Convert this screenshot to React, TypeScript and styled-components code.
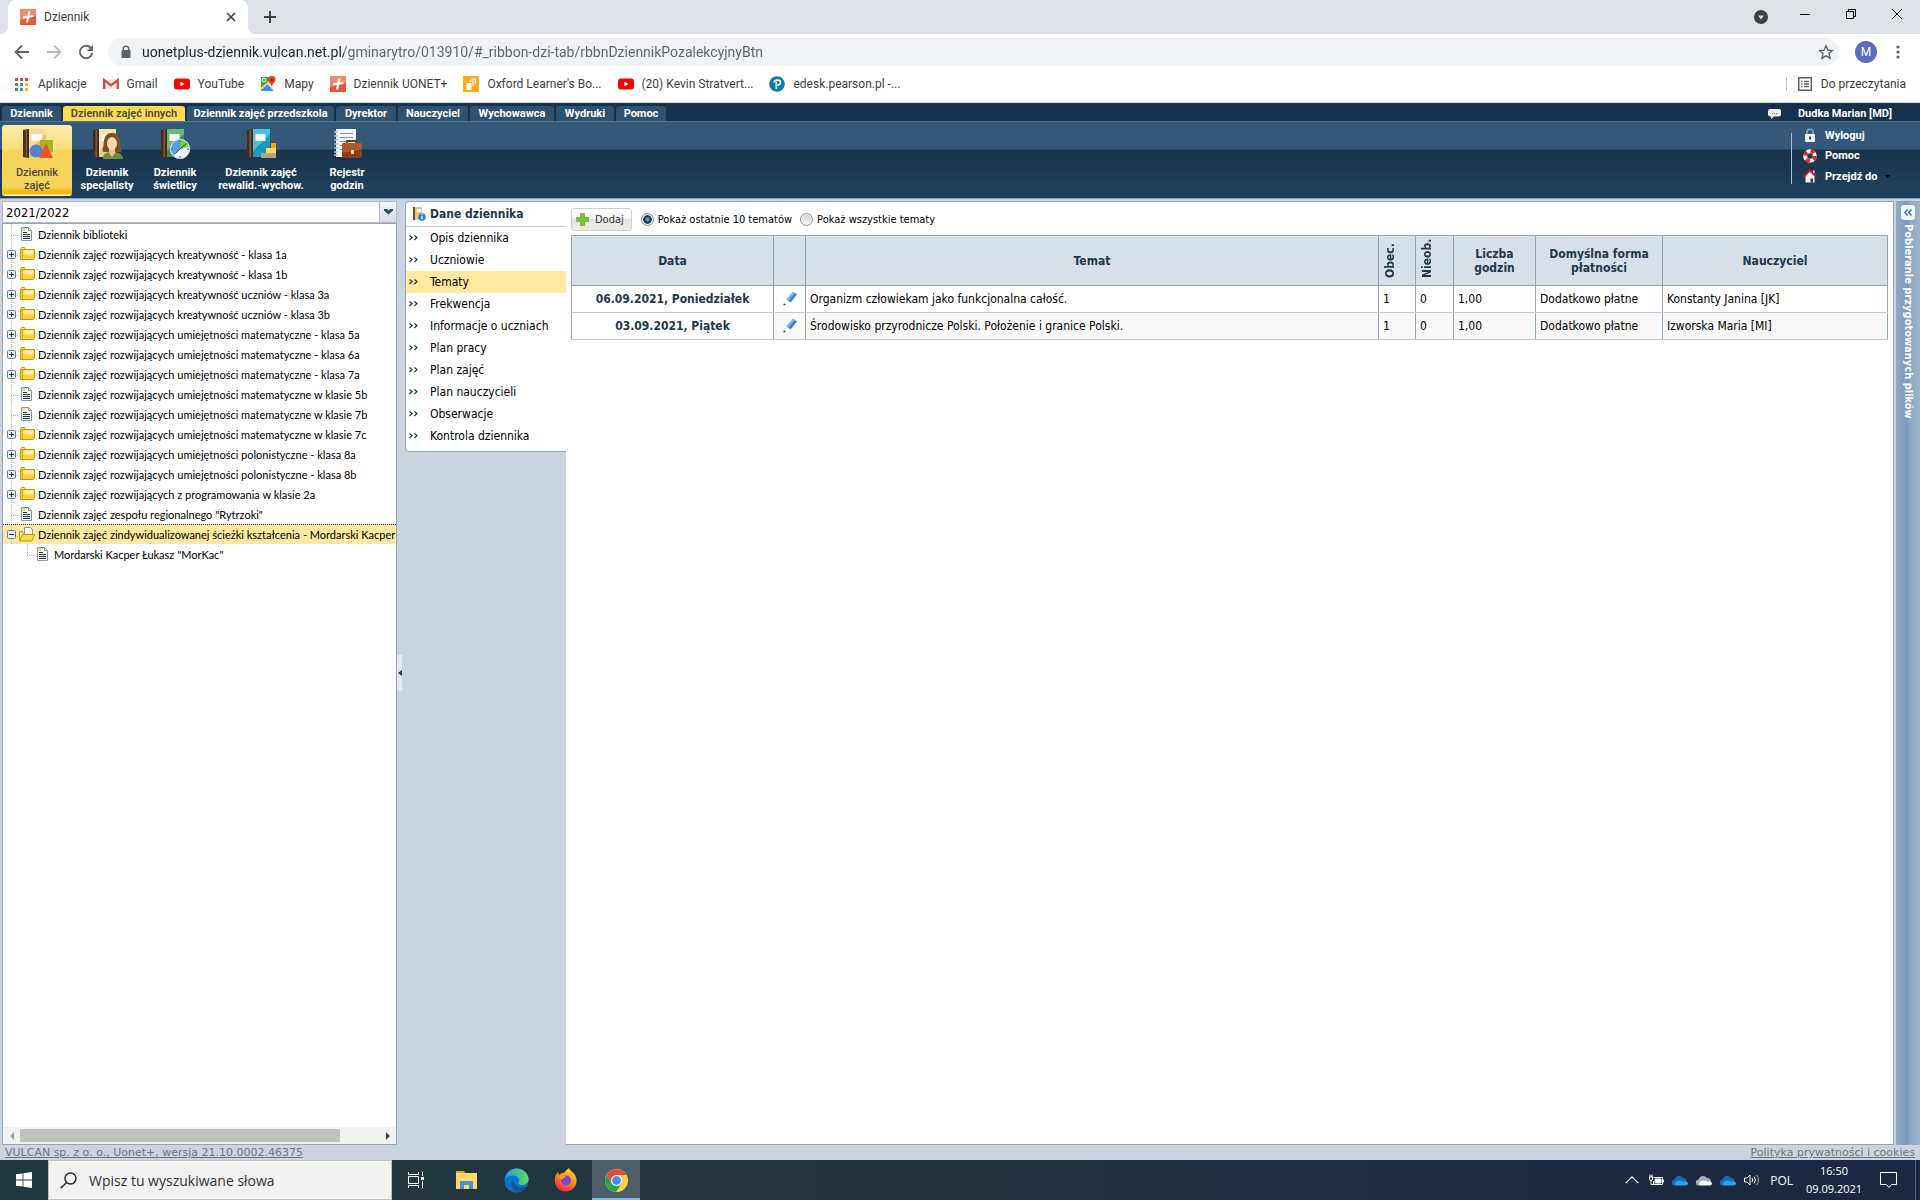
import React from "react";
import styled, { createGlobalStyle, css } from "styled-components";

const tahoma = `"DejaVu Sans Condensed", "DejaVu Sans", sans-serif`;
const compact = `Roboto, "Noto Sans", sans-serif`;
const segoe = `"Open Sans", "Noto Sans", sans-serif`;

const Global = createGlobalStyle`
  *, *::before, *::after { box-sizing: border-box; }
  body { margin: 0; background: #cad4e1; font-family: ${tahoma}; font-size: 12px; color: #000; }
  button, input, select { font: inherit; color: inherit; margin: 0; }
  button { border: 0; padding: 0; background: none; cursor: pointer; }
  ul { list-style: none; margin: 0; padding: 0; }
  a { color: inherit; text-decoration: none; }
  svg { display: block; flex: none; }
`;

const Page = styled.div`
  display: flex;
  flex-direction: column;
  height: 100vh;
  overflow: hidden;
`;

/* ---------- browser ---------- */

const TabStrip = styled.div`
  display: flex;
  align-items: stretch;
  height: 34px;
  padding-left: 8px;
  background: #dee1e6;
  font-family: ${compact};
`;

const BrowserTab = styled.div`
  position: relative;
  display: flex;
  align-items: center;
  gap: 8px;
  width: 240px;
  padding: 0 10px 0 12px;
  border-radius: 8px 8px 0 0;
  background: #fff;
  color: #3c4043;
  &::before, &::after {
    content: "";
    position: absolute;
    bottom: 0;
    width: 8px;
    height: 8px;
  }
  &::before { left: -8px; background: radial-gradient(circle at 0 0, transparent 8px, #fff 8px); }
  &::after { right: -8px; background: radial-gradient(circle at 100% 0, transparent 8px, #fff 8px); }
`;

const TabTitle = styled.span`
  flex: 1;
`;

const NewTab = styled.button`
  display: grid;
  place-items: center;
  width: 28px;
  margin-left: 8px;
`;

const WindowButtons = styled.div`
  display: flex;
  align-items: flex-start;
  margin-left: auto;
`;

const WindowButton = styled.button`
  display: grid;
  place-items: center;
  width: 46px;
  height: 28px;
`;

const TabSearch = styled(WindowButton)`
  width: 42px;
  height: 34px;
`;

const AddressRow = styled.div`
  display: flex;
  align-items: center;
  height: 36px;
  padding: 0 6px;
  background: #fff;
  font-family: ${compact};
`;

const NavButton = styled.button`
  display: grid;
  place-items: center;
  width: 32px;
  height: 28px;
`;

const Omnibox = styled.label`
  display: flex;
  flex: 1;
  align-items: center;
  gap: 10px;
  height: 28px;
  margin: 0 6px;
  padding: 0 5px 0 12px;
  border-radius: 14px;
  background: #f1f3f4;
`;

const UrlInput = styled.input`
  flex: 1;
  border: 0;
  padding: 0;
  outline: 0;
  font-size: 14px;
  line-height: 20px;
  color: transparent;
  background: linear-gradient(90deg, #202124 202px, #5f6368 202px);
  background-clip: text;
`;

const Avatar = styled.button`
  width: 22px;
  height: 22px;
  margin: 0 5px 0 10px;
  border-radius: 50%;
  background: #5c6bc0;
  color: #fff;
`;

const Bookmarks = styled.nav`
  display: flex;
  align-items: center;
  height: 33px;
  padding: 0 14px 4px;
  border-bottom: 1px solid #d0d3d6;
  background: #fff;
  color: #3c4043;
  font-family: ${compact};
  font-size: 12px;
`;

const Bookmark = styled.a<{ $push?: boolean }>`
  display: flex;
  align-items: center;
  gap: 8px;
  margin-right: 16px;
  ${(p) => p.$push && css`
    margin: 0 0 0 auto;
    padding-left: 11px;
    border-left: 1px solid #c4c7ca;
    gap: 9px;
  `}
`;

/* ---------- application header ---------- */

const TabBar = styled.div`
  display: flex;
  align-items: flex-end;
  height: 18px;
  padding-left: 2px;
  background: #18314a;
  font-family: ${compact};
  font-size: 11px;
  font-weight: 700;
  color: #fff;
`;

const RibbonTab = styled.button<{ $active?: boolean; $w: number }>`
  width: ${(p) => p.$w}px;
  height: 15px;
  margin-right: 2px;
  border-radius: 3px 3px 0 0;
  background: ${(p) => (p.$active ? "#ffda50" : "#2f5273")};
  color: ${(p) => (p.$active ? "#4a4a3c" : "#fff")};
  font-weight: ${(p) => (p.$active ? 600 : 700)};
  line-height: 16px;
  white-space: nowrap;
`;

const User = styled.div`
  display: flex;
  align-items: center;
  gap: 17px;
  height: 15px;
  margin: 0 28px 0 auto;
  line-height: 15px;
`;

const Ribbon = styled.header`
  display: flex;
  height: 77px;
  padding: 3px 2px 0;
  border-top: 1px solid #557590;
  background: linear-gradient(#335879 0 27px, #19334b 28px, #20425f);
  font-family: ${compact};
  font-size: 11px;
  font-weight: 700;
  color: #fff;
`;

const RibbonButton = styled.button<{ $active?: boolean; $wide?: boolean }>`
  display: flex;
  flex-direction: column;
  align-items: center;
  gap: 7px;
  width: ${(p) => (p.$wide ? 102 : p.$active ? 70 : 66)}px;
  height: 71px;
  margin-right: 2px;
  padding-top: 4px;
  border-radius: 3px;
  line-height: 13px;
  white-space: pre-line;
  ${(p) => p.$active && css`
    background: linear-gradient(#fcebad 0, #f9df79 24px, #f5d55a 25px, #f5d55a 62px, #efbc10 66px, #efbc10 69px, #fff3c0 70px);
    color: #4a4a3c;
    font-weight: 500;
  `}
`;

const QuickMenu = styled.ul`
  display: flex;
  flex-direction: column;
  justify-content: space-between;
  height: 59px;
  margin: 1px 26px 0 auto;
  padding-left: 12px;
  background: linear-gradient(#a9bccb, #a9bccb) 0 7px / 1px 51px no-repeat;
`;

const QuickLink = styled.a`
  display: flex;
  align-items: center;
  gap: 8px;
  width: 89px;
  height: 18px;
`;

/* ---------- workspace ---------- */

const Work = styled.div`
  display: flex;
  flex: 1;
  min-height: 0;
  padding-top: 2px;
  border-top: 1px solid #8aa0b6;
`;

const Side = styled.aside`
  display: flex;
  flex-direction: column;
  width: 395px;
  margin-left: 2px;
`;

const YearBox = styled.div`
  display: flex;
  flex: none;
  position: relative;
  height: 22px;
  border: 1px solid #b5b8c8;
  background: #fff;
`;

const YearSelect = styled.select`
  flex: 1;
  appearance: none;
  border: 0;
  padding: 0 3px;
  outline: 0;
  background: linear-gradient(#f0f2f3, #fff 5px);
  font-size: 13px;
`;

const YearArrow = styled.span`
  position: absolute;
  right: 0;
  top: 0;
  display: grid;
  place-items: center;
  width: 17px;
  height: 20px;
  border-left: 1px solid #b5b8c8;
  background: linear-gradient(#f7f8f9, #d4dae2);
  pointer-events: none;
`;

const TreePanel = styled.div`
  display: flex;
  flex: 1;
  flex-direction: column;
  justify-content: space-between;
  min-height: 0;
  border: 1px solid #8ea6be;
  background: #fff;
`;

const Tree = styled.ul`
  overflow: hidden;
  font-family: Lato, ${compact};
  font-size: 11px;
`;

const TreeRow = styled.li<{ $selected?: boolean; $child?: boolean }>`
  display: flex;
  align-items: center;
  height: 20px;
  padding-left: ${(p) => (p.$child ? 20 : 4)}px;
  white-space: nowrap;
  ${(p) => p.$selected && css`
    border-top: 1px dotted #333;
    background: #ffe8a0;
  `}
`;

const Branch = styled.span<{ $child?: boolean }>`
  display: grid;
  align-items: center;
  flex: none;
  width: 12px;
  height: 20px;
  background:
    repeating-linear-gradient(#b8b8b8 0 1px, transparent 1px 2px) 4px 0 / 1px ${(p) => (p.$child ? "11px" : "100%")} no-repeat,
    repeating-linear-gradient(90deg, #b8b8b8 0 1px, transparent 1px 2px) 4px 11px / 7px 1px no-repeat;
`;

const TreeLink = styled.a`
  display: flex;
  flex: none;
  align-items: center;
  gap: 3px;
`;

const ScrollTrack = styled.div`
  display: flex;
  align-items: center;
  height: 17px;
  background: #f1f1f1;
`;

const ScrollArrow = styled.button`
  display: grid;
  place-items: center;
  width: 17px;
  height: 17px;
`;

const ScrollThumb = styled.div`
  width: 89%;
  height: 13px;
  background: #c1c1c1;
`;

const ScrollRoom = styled.div`
  flex: 1;
`;

const Splitter = styled.div`
  display: flex;
  align-items: center;
  width: 8px;
`;

const SplitGrip = styled.button`
  display: grid;
  place-items: center;
  width: 5px;
  height: 36px;
  background: #e3e9f0;
`;

const Menu = styled.nav`
  align-self: flex-start;
  width: 161px;
  height: 251px;
  border: solid #8ea6be;
  border-width: 1px 0 1px 1px;
  border-radius: 4px 0 0 4px;
  background: #fff;
`;

const MenuTitle = styled.h2`
  display: flex;
  align-items: center;
  gap: 4px;
  height: 25px;
  margin: 0;
  padding-left: 6px;
  border-bottom: 1px solid #c8cbd0;
  font-size: 12px;
  font-weight: 700;
  color: #20384e;
`;

const MenuLink = styled.a<{ $active?: boolean }>`
  display: flex;
  align-items: center;
  gap: 12px;
  height: 22px;
  padding-left: 3px;
  background: ${(p) => (p.$active ? "#ffe8a0" : "transparent")};
`;

const Content = styled.main`
  flex: 1;
  min-width: 0;
  padding: 6px 5px;
  border: solid #8ea6be;
  border-width: 1px 1px 1px 0;
  background: #fff;
`;

const Toolbar = styled.div`
  display: flex;
  align-items: center;
  height: 23px;
  margin-bottom: 4px;
  font-size: 11px;
`;

const AddButton = styled.button`
  display: flex;
  align-items: center;
  gap: 6px;
  height: 23px;
  margin-right: 9px;
  padding: 0 7px 0 4px;
  border: 1px solid #d0d0d0;
  border-radius: 3px;
  background: linear-gradient(#fff, #f4f4f4 50%, #e4e4e4 50%, #eaeaea);
  color: #333;
`;

const RadioLabel = styled.label`
  display: flex;
  align-items: center;
  gap: 4px;
  margin-right: 8px;
`;

const Radio = styled.input`
  appearance: none;
  width: 13px;
  height: 13px;
  margin: 0;
  border: 1px solid #8d8d8d;
  border-radius: 50%;
  background: linear-gradient(#cfcfcf, #f7f7f7);
  box-shadow: inset 0 0 0 1px #f5f5f5;
  &:checked { background: radial-gradient(circle, #4fa3c8 0 1px, #17405e 3px, #17405e 4px, #f0f4f7 5px); }
`;

const Table = styled.table`
  width: 100%;
  table-layout: fixed;
  border-collapse: collapse;
`;

const Col = styled.col<{ $w?: number }>`
  ${(p) => p.$w && css`width: ${p.$w}px;`}
`;

const Th = styled.th<{ $start?: boolean }>`
  height: 50px;
  padding: 0 4px;
  border: 1px solid #8ea6be;
  background: #d7dfe8;
  line-height: 14px;
  text-align: ${(p) => (p.$start ? "left" : "center")};
  color: #20384e;
`;

const Upright = styled.span`
  display: inline-block;
  height: 42px;
  padding-top: 2px;
  writing-mode: vertical-rl;
  transform: rotate(180deg);
  line-height: 14px;
`;

const Td = styled.td<{ $strong?: boolean }>`
  height: 27px;
  padding: 0 4px;
  border: solid #8ea6be;
  border-width: 0 1px;
  border-bottom: 1px solid #c8cbcf;
  white-space: nowrap;
  ${(p) => p.$strong && css`
    font-weight: 700;
    text-align: center;
    color: #20384e;
  `}
`;

const Tr = styled.tr`
  &:nth-child(even) td { background: #f9f9f9; }
  &:nth-child(even) td:first-child { background: #fff; }
`;

const EditButton = styled.button`
  display: grid;
  width: 100%;
  place-items: center;
`;

const FilesBar = styled.aside`
  display: flex;
  flex-direction: column;
  align-items: center;
  gap: 4px;
  width: 24px;
  margin-left: 2px;
  padding-top: 4px;
  background: linear-gradient(90deg, #8faac3, #7b9aba 12px, #8ba8c3 13px, #9db4ca);
  color: #fff;
  font-size: 11px;
  font-weight: 700;
`;

const Expand = styled.button`
  display: grid;
  place-items: center;
  width: 14px;
  height: 15px;
  border-radius: 3px;
  background: #f1f6fc;
`;

const FilesTitle = styled.span`
  writing-mode: vertical-rl;
  line-height: 14px;
`;

const Footer = styled.footer`
  display: flex;
  justify-content: space-between;
  height: 15px;
  padding: 0 5px;
  font-family: "DejaVu Sans", sans-serif;
  font-size: 11px;
  line-height: 15px;
  color: #6e757c;
  a { text-decoration: underline; }
`;

/* ---------- taskbar ---------- */

const Taskbar = styled.div`
  display: flex;
  align-items: center;
  height: 40px;
  background: linear-gradient(90deg, #22373f, #22353f 50%, #1a2941 85%);
  color: #fff;
  font-family: ${segoe};
`;

const StartButton = styled.button`
  display: grid;
  place-items: center;
  width: 48px;
  height: 40px;
`;

const SearchBox = styled.label`
  display: flex;
  align-items: center;
  gap: 12px;
  width: 344px;
  height: 40px;
  padding-left: 11px;
  border: 1px solid #bfbfbf;
  background: #f1f1f1;
  color: #222;
  font-size: 14px;
`;

const SearchInput = styled.input`
  flex: 1;
  border: 0;
  padding: 0;
  outline: 0;
  background: none;
  &::placeholder { color: #333; }
`;

const TaskButton = styled.button<{ $active?: boolean }>`
  display: grid;
  place-items: center;
  width: 48px;
  height: 40px;
  margin-right: 2px;
  ${(p) => p.$active && css`
    background: #4d5e66;
    box-shadow: inset 0 -2px #76b9ed;
  `}
`;

const Tray = styled.div`
  display: flex;
  align-items: center;
  gap: 8px;
  height: 40px;
  margin-left: auto;
  padding-right: 4px;
  font-size: 12px;
`;

const Lang = styled.span`
  margin-left: 2px;
`;

const Clock = styled.time`
  width: 66px;
  font-size: 11px;
  line-height: 18px;
  text-align: center;
  white-space: pre-line;
`;

const Notify = styled.button`
  display: grid;
  place-items: center;
  width: 26px;
  height: 40px;
  margin-right: 6px;
`;

const ShowDesktop = styled.button`
  width: 1px;
  height: 40px;
  background: #56637a;
`;

/* ---------- icons ---------- */

const VulcanIcon = () => (
  <svg width="16" height="16" viewBox="0 0 16 16">
    <rect width="16" height="16" fill="#e65a32" />
    <path d="M0 0h16v7L0 11z" fill="#f08a6a" />
    <path d="M9.4 2.5 7 13.5M3 8.4 13.5 7" stroke="#fff" strokeWidth="2.2" />
  </svg>
);
const YouTubeIcon = () => (
  <svg width="16" height="16" viewBox="0 0 16 16">
    <rect y="2.5" width="16" height="11" rx="3" fill="#f00" />
    <path d="m6.4 5.7 4.2 2.3-4.2 2.3z" fill="#fff" />
  </svg>
);
const AppsIcon = () => (
  <svg width="16" height="16" viewBox="0 0 16 16">
    {["#ea4335", "#ea4335", "#ea4335", "#34a853", "#4285f4", "#fbbc05", "#34a853", "#34a853", "#fbbc05"].map((c, i) => (
      <rect key={i} x={1 + (i % 3) * 5} y={2 + Math.floor(i / 3) * 5} width="3" height="3" fill={c} />
    ))}
  </svg>
);
const GmailIcon = () => (
  <svg width="16" height="16" viewBox="0 0 16 16">
    <path d="M0 3h16v10H0z" fill="#ececec" />
    <path d="M1.2 13V4l6.8 5.3L14.8 4v9" fill="none" stroke="#d9493a" strokeWidth="2.3" />
  </svg>
);
const MapsIcon = () => (
  <svg width="16" height="16" viewBox="0 0 16 16">
    <path d="M1 1h10v14H1z" fill="#34a853" />
    <path d="m1 14 6-6 7 7H2z" fill="#4285f4" />
    <path d="m7 8 5-4 2 11z" fill="#dfe3e6" />
    <path d="m1 13 10-9" stroke="#fbd24a" strokeWidth="2" />
    <circle cx="4" cy="4" r="1.8" fill="none" stroke="#fff" />
    <path d="M11.8 0A3.7 3.7 0 0 0 8 3.7c0 2.8 3 3.4 3.8 7 .8-3.6 3.8-4.2 3.8-7A3.7 3.7 0 0 0 11.8 0z" fill="#ea4335" />
    <circle cx="11.8" cy="3.8" r="1.4" fill="#8c2018" />
  </svg>
);
const OxfordIcon = () => (
  <svg width="16" height="16" viewBox="0 0 16 16">
    <rect width="16" height="16" fill="#fbad18" />
    <path d="M3.5 7h5v7h-5zM6 4.500h4.500V10H9.500V5.800H6zM8.500 2.500H13v5h-1.200V3.800H8.500z" fill="#fff" />
  </svg>
);
const PearsonIcon = () => (
  <svg width="16" height="16" viewBox="0 0 16 16">
    <circle cx="8" cy="8" r="7.8" fill="#0b7fa5" />
    <path d="M5 6.500C5 3.500 11.500 3 11.500 6.300c0 2.200-2 2.900-3.700 2.900M7.300 5.500V13" fill="none" stroke="#fff" strokeWidth="1.6" />
  </svg>
);
const ReadListIcon = () => (
  <svg width="14" height="14" viewBox="0 0 14 14" stroke="#5f6368" fill="none">
    <rect x=".75" y=".75" width="12.5" height="12.5" strokeWidth="1.5" />
    <path d="M3 4.500h1.500M6 4.500h5M3 7h1.500M6 7h5M3 9.500h1.500M6 9.500h5" strokeWidth="1.3" />
  </svg>
);

const Book = ({ color, light }: { color: string; light: string }) => (
  <>
    <path d="M1 1 7 0v29l-6-1z" fill="#4a2c1c" />
    <path d="M3.500 1 5 .8v27.500l-1.500-.5z" fill="#7d5844" />
    <path d="M7 0h17v28H7z" fill={color} />
    <path d="M7 0h17v5L7 22z" fill={light} />
    <path d="M9.500 5h10v7h-10z" fill="#fff" opacity=".9" />
  </>
);
const BookShapes = () => (
  <svg width="31" height="30" viewBox="0 0 31 30">
    <Book color="#e9c163" light="#f5dc98" />
    <path d="M18 11h13v12H18z" fill="#a9b31f" />
    <circle cx="14" cy="22" r="6.5" fill="#5181cf" />
    <path d="m24 14 7 15H17z" fill="#f0522a" />
  </svg>
);
const BookPerson = () => (
  <svg width="31" height="30" viewBox="0 0 31 30">
    <Book color="#e9cf81" light="#f4e3ab" />
    <path d="M20 4c-8 0-8 8-8.500 12-.3 3-2 6 0 7h17c2-1 .5-4 0-7-.5-4-.5-12-8.500-12z" fill="#7f4f25" />
    <path d="M11 30c0-6 4-7 9-7s11 1 11 7z" fill="#6f8b3e" />
    <path d="M17 19h6v5l-3 4-3-4z" fill="#efc091" />
    <ellipse cx="20" cy="14.5" rx="5" ry="6.5" fill="#fbd9b1" />
  </svg>
);
const BookClock = () => (
  <svg width="31" height="30" viewBox="0 0 31 30">
    <Book color="#3d8e4e" light="#6fb57a" />
    <circle cx="20" cy="20" r="9.7" fill="#eef6ff" stroke="#c5d6e6" />
    <path d="M20 20V11a9 9 0 0 0-7 14.500z" fill="#5a9fe8" />
    <path d="M20 20V11a9 9 0 0 1 8.800 7z" fill="#77cf3f" />
    <path d="m20 20 6.500-5.500M20 20l-6.500 6" stroke="#333" />
    <path d="M20 11v2M20 27v2M11 20h2M27 20h2" stroke="#555" />
  </svg>
);
const BookBlocks = () => (
  <svg width="31" height="30" viewBox="0 0 31 30">
    <Book color="#189bbd" light="#50c0d9" />
    <path d="M25 14h5v5h-5z" fill="#ffa20a" />
    <path d="M20 19h10v5H20z" fill="#ffd75c" />
    <path d="M15 24h15v5H15z" fill="#b3a77a" />
  </svg>
);
const NotesCase = () => (
  <svg width="31" height="30" viewBox="0 0 31 30">
    <path d="M4 0h20v28H4z" fill="#f4f5f7" />
    <path d="M8 4.500h13M8 8.500h13M8 12.500h8M8 16.500h3M8 20.500h2" stroke="#8793a3" />
    <path d="M2 3h4M2 7h4M2 11h4M2 15h4M2 19h4M2 23h4M2 26h4" stroke="#b6bec8" strokeWidth="1.5" />
    <path d="M15 15v-3h9v3" fill="none" stroke="#7a3516" strokeWidth="1.8" />
    <rect x="10" y="14" width="20" height="15" rx="2" fill="#8c3d19" />
    <path d="M10 16q0-2 2-2h16q2 0 2 2v4q-10 4-20 3z" fill="#b0592c" />
    <path d="M19 21h3v4h-3z" fill="#f0d9a4" />
  </svg>
);

const FolderIcon = () => (
  <svg width="16" height="16" viewBox="0 0 16 16">
    <path d="M1.500 13.500V3.500l1-2h3l1 2" fill="#ffe98c" stroke="#c49a05" />
    <path d="M2.500 3.500h13v9l-1 1h-13v-9z" fill="#fbd03a" stroke="#c49a05" />
    <path d="M4.500 4.500h10v4h-10z" fill="#fff0a5" />
    <path d="M3.500 4v9" stroke="#e0ab08" />
  </svg>
);
const FolderOpenIcon = () => (
  <svg width="16" height="16" viewBox="0 0 16 16">
    <path d="M5.500 9V.5h6l2 2V9" fill="#fff" stroke="#8092ab" />
    <path d="M.5 14V4.500h3l1 2" fill="#ffe98c" stroke="#c49a05" />
    <path d="M3.500 7.500h12l-2.500 6.500H.7z" fill="#ffd84a" stroke="#c49a05" />
  </svg>
);
const LeafIcon = () => (
  <svg width="16" height="16" viewBox="0 0 16 16">
    <path d="M2.500 1.500h7l3 3v10h-10z" fill="#fff" stroke="#7d95b3" />
    <path d="M3 2h3v3H3z" fill="#ffe24d" />
    <path d="M9.500 1.500v3h3" fill="none" stroke="#7d95b3" />
    <path d="M4 6.500h4M4 8.500h7M4 10.500h7M4 12.500h7" stroke="#1f3653" />
  </svg>
);
const ToggleIcon = ({ open }: { open?: boolean }) => (
  <svg width="9" height="9" viewBox="0 0 9 9">
    <rect x=".5" y=".5" width="8" height="8" rx="1" fill="#e8edf4" stroke="#6780a2" />
    <path d={open ? "M2 4.500h5" : "M2 4.500h5M4.500 2v5"} stroke="#1f3551" />
  </svg>
);
const InfoBook = () => (
  <svg width="14" height="14" viewBox="0 0 14 14">
    <path d="M1 0h2v13H1z" fill="#6b4a33" />
    <path d="M3 0h7v13H3z" fill="#e4c58a" />
    <path d="M5 2h4v3H5z" fill="#fff" />
    <circle cx="10" cy="10" r="3.8" fill="#2a87c8" />
    <path d="M10 9v3.300M10 7.200v1.100" stroke="#fff" strokeWidth="1.3" />
  </svg>
);
const Chevrons = () => (
  <svg width="9" height="6" viewBox="0 0 9 6" fill="none" stroke="#1d3850" strokeWidth="1.2">
    <path d="m.5.5 2.500 2L.5 5M5.500.5l2.500 2L5.500 5" />
  </svg>
);
const PlusIcon = () => (
  <svg width="13" height="13" viewBox="0 0 13 13">
    <path d="M4.500.5h4v4h4v4h-4v4h-4v-4h-4v-4h4z" fill="#7ac32a" stroke="#58a01c" strokeWidth=".6" />
  </svg>
);
const PencilIcon = () => (
  <svg width="16" height="16" viewBox="0 0 16 16">
    <path d="M4.500 8.500 11 1l4 2.200-6.300 8.300z" fill="#3c7fd6" />
    <path d="M4.500 8.500 11 1l1.800 1-6.500 8z" fill="#7cb2f2" />
    <path d="M1.500 13.500h2" stroke="#445" strokeWidth="1.6" />
  </svg>
);
const ChatIcon = () => (
  <svg width="13" height="10" viewBox="0 0 13 10">
    <path d="M2 0h9q2 0 2 2v3.500q0 2-2 2H6L3 10V7.500H2q-2 0-2-2V2q0-2 2-2z" fill="#eee" />
    <path d="M4 4.500h1.200M6 4.500h1.200M8 4.500h1.200" stroke="#777" />
  </svg>
);
const LockIcon = () => (
  <svg width="14" height="15" viewBox="0 0 14 15">
    <path d="M4 7V4q0-2.800 3-2.800T10 4v3" fill="none" stroke="#8ea5b5" strokeWidth="1.6" />
    <rect x="2" y="6" width="10" height="8" rx="1" fill="#f2f2f2" />
    <path d="M6.300 8.500h1.500v3H6.300z" fill="#111" />
  </svg>
);
const BuoyIcon = () => (
  <svg width="14" height="14" viewBox="0 0 14 14" fill="none">
    <circle cx="7" cy="7" r="4.8" stroke="#fff" strokeWidth="4" />
    <circle cx="7" cy="7" r="4.8" stroke="#e3231b" strokeWidth="4" strokeDasharray="3.77 3.77" />
  </svg>
);
const HomeIcon = () => (
  <svg width="14" height="14" viewBox="0 0 14 14">
    <path d="m2.500 7 4.500-5 4.500 5v6.500h-9z" fill="#f1f1ee" />
    <path d="M7.500 9.500H10v4H7.500z" fill="#244560" />
    <path d="M10 1.500h1.500V5L10 4z" fill="#eee" />
    <path d="m.5 8 6.500-6.500L13.500 8" fill="none" stroke="#d8191b" strokeWidth="1.8" />
  </svg>
);

const StartIcon = () => (
  <svg width="16" height="16" viewBox="0 0 16 16" fill="#fff">
    <path d="M0 2.300 6.600 1.400v6.200H0zM7.400 1.300 16 0v7.600H7.400zM0 8.400h6.600v6.200L0 13.700zM7.400 8.400H16V16l-8.600-1.300z" />
  </svg>
);
const TaskViewIcon = () => (
  <svg width="17" height="16" viewBox="0 0 17 16" fill="none" stroke="#fff">
    <path d="M.5 0v2.500h10V0M.5 16v-2.500h10V16M.5 4.500h10v7H.5zM14.500 0v4M14.500 9v7" />
    <path d="M13 5h3v3h-3z" fill="#fff" stroke="none" />
  </svg>
);
const ExplorerIcon = () => (
  <svg width="23" height="20" viewBox="0 0 23 20">
    <path d="M1 1h8l2 3H1z" fill="#e5a50f" />
    <path d="M1 3h21v16H1z" fill="#ffd867" />
    <path d="M5 19v-8h13v8h-4v-4H9v4z" fill="#3f96dc" />
  </svg>
);
const EdgeIcon = () => (
  <svg width="25" height="25" viewBox="0 0 25 25">
    <defs>
      <linearGradient id="edgeTop" x1="0" x2="1"><stop offset="0" stopColor="#1b9de2" /><stop offset="1" stopColor="#5fdc5c" /></linearGradient>
    </defs>
    <circle cx="12.5" cy="12.5" r="12" fill="#0c74cf" />
    <path d="M.5 12C1.500 5 6.500.5 12.500.5 20 .5 24.500 6 24.500 11c0 4-3 6-6.500 6-3 0-4-1.500-3.500-2.500 2-3-.5-7-5.500-7S1 10 .5 12z" fill="url(#edgeTop)" />
    <path d="M9 11c-4 5-.5 12 5 13 4 0 7.500-3 9-6-6 3.500-14 .5-14-7z" fill="#22374a" opacity=".45" />
  </svg>
);
const FirefoxIcon = () => (
  <svg width="24" height="24" viewBox="0 0 24 24">
    <defs>
      <linearGradient id="fox" x1=".8" y1="0" x2=".3" y2="1"><stop offset="0" stopColor="#ffe226" /><stop offset=".5" stopColor="#ff8a16" /><stop offset="1" stopColor="#f0245f" /></linearGradient>
    </defs>
    <path d="M15 0c1 3 4 4 6 7 4 7 0 16-9 16.500C4 23.500-.5 17 1 9.500 1.500 7 3 5 4 4l1 3c1.500-1.500 3-2 5-2 1.500-2 3-3.500 5-5z" fill="url(#fox)" />
    <circle cx="12" cy="12.5" r="5" fill="#7a45d8" />
    <path d="M6 8c2-1 4-1 6 1-1.500 1-3 .5-3.500 2.500-1.500 0-3-1.500-2.500-3.500z" fill="#ff9c1a" />
  </svg>
);
const ChromeIcon = () => (
  <svg width="23" height="23" viewBox="0 0 24 24">
    <circle cx="12" cy="12" r="12" fill="#fdd248" />
    <path d="M1.600 6a12 12 0 0 1 20.800 0.300H12L6.800 15z" fill="#dd4b3e" />
    <path d="M1.600 6A12 12 0 0 0 11.500 24L17.200 15 6.800 15z" fill="#28a15a" />
    <circle cx="12" cy="12" r="5.8" fill="#f4f6f8" />
    <circle cx="12" cy="12" r="4.6" fill="#4a8af4" />
  </svg>
);
const CloudIcon = ({ back, front }: { back: string; front: string }) => (
  <svg width="16" height="11" viewBox="0 0 16 11">
    <path d="M3 10.500a3 3 0 0 1-.5-6A4.800 4.800 0 0 1 11 3a4 4 0 0 1 4 4z" fill={back} />
    <path d="M4 10.500a2.500 2.500 0 0 1 0-4q4-2 7 0 5-.5 5 2 0 2-2 2z" fill={front} />
  </svg>
);

/* ---------- data ---------- */

const ribbonTabs: [string, number][] = [
  ["Dziennik", 59], ["Dziennik zajęć innych", 122], ["Dziennik zajęć przedszkola", 147], ["Dyrektor", 60],
  ["Nauczyciel", 70], ["Wychowawca", 84], ["Wydruki", 58], ["Pomoc", 50],
];
const Z = "Dziennik zajęć rozwijających";
type Node = { text: string; kind: "leaf" | "folder" | "open"; child?: boolean };
const tree: Node[] = [
  { text: "Dziennik biblioteki", kind: "leaf" },
  { text: `${Z} kreatywność - klasa 1a`, kind: "folder" },
  { text: `${Z} kreatywność - klasa 1b`, kind: "folder" },
  { text: `${Z} kreatywność uczniów - klasa 3a`, kind: "folder" },
  { text: `${Z} kreatywność uczniów - klasa 3b`, kind: "folder" },
  { text: `${Z} umiejętności matematyczne - klasa 5a`, kind: "folder" },
  { text: `${Z} umiejętności matematyczne - klasa 6a`, kind: "folder" },
  { text: `${Z} umiejętności matematyczne - klasa 7a`, kind: "folder" },
  { text: `${Z} umiejętności matematyczne w klasie 5b`, kind: "leaf" },
  { text: `${Z} umiejętności matematyczne w klasie 7b`, kind: "leaf" },
  { text: `${Z} umiejętności matematyczne w klasie 7c`, kind: "folder" },
  { text: `${Z} umiejętności polonistyczne - klasa 8a`, kind: "folder" },
  { text: `${Z} umiejętności polonistyczne - klasa 8b`, kind: "folder" },
  { text: `${Z} z programowania w klasie 2a`, kind: "folder" },
  { text: `Dziennik zajęć zespołu regionalnego "Rytrzoki"`, kind: "leaf" },
  { text: "Dziennik zajęć zindywidualizowanej ścieżki kształcenia - Mordarski Kacper", kind: "open" },
  { text: `Mordarski Kacper Łukasz "MorKac"`, kind: "leaf", child: true },
];
const menu = ["Opis dziennika", "Uczniowie", "Tematy", "Frekwencja", "Informacje o uczniach", "Plan pracy", "Plan zajęć", "Plan nauczycieli", "Obserwacje", "Kontrola dziennika"];
const topics = [
  ["06.09.2021, Poniedziałek", "Organizm człowiekam jako funkcjonalna całość.", "1", "0", "1,00", "Dodatkowo płatne", "Konstanty Janina [JK]"],
  ["03.09.2021, Piątek", "Środowisko przyrodnicze Polski. Położenie i granice Polski.", "1", "0", "1,00", "Dodatkowo płatne", "Izworska Maria [MI]"],
];
const bookmarks: [React.ReactNode, string][] = [
  [<AppsIcon />, "Aplikacje"], [<GmailIcon />, "Gmail"], [<YouTubeIcon />, "YouTube"], [<MapsIcon />, "Mapy"],
  [<VulcanIcon />, "Dziennik UONET+"], [<OxfordIcon />, "Oxford Learner's Bo..."], [<YouTubeIcon />, "(20) Kevin Stratvert..."],
  [<PearsonIcon />, "edesk.pearson.pl -..."],
];

const Browser = () => (
  <>
    <TabStrip>
      <BrowserTab>
        <VulcanIcon />
        <TabTitle>Dziennik</TabTitle>
        <button aria-label="Zamknij kartę">
          <svg width="14" height="14" viewBox="0 0 14 14"><path d="m3 3 8 8M11 3l-8 8" stroke="#3c4043" strokeWidth="1.6" /></svg>
        </button>
      </BrowserTab>
      <NewTab aria-label="Nowa karta">
        <svg width="14" height="14" viewBox="0 0 14 14"><path d="M7 1v12M1 7h12" stroke="#3c4043" strokeWidth="1.9" /></svg>
      </NewTab>
      <WindowButtons>
        <TabSearch aria-label="Wyszukaj karty">
          <svg width="14" height="14" viewBox="0 0 14 14"><circle cx="7" cy="7" r="7" fill="#3c4043" /><path d="M4 5.500h6L7 9.500z" fill="#dee1e6" /></svg>
        </TabSearch>
        <WindowButton aria-label="Minimalizuj"><svg width="10" height="10" viewBox="0 0 10 10"><path d="M0 5.500h10" stroke="#000" /></svg></WindowButton>
        <WindowButton aria-label="Przywróć"><svg width="10" height="10" viewBox="0 0 10 10" fill="none" stroke="#000"><path d="M.5 2.500h7v7h-7zM2.500 2.500v-2h7v7h-2" /></svg></WindowButton>
        <WindowButton aria-label="Zamknij"><svg width="10" height="10" viewBox="0 0 10 10"><path d="m0 0 10 10M10 0 0 10" stroke="#000" /></svg></WindowButton>
      </WindowButtons>
    </TabStrip>
    <AddressRow>
      <NavButton aria-label="Wstecz"><svg width="16" height="16" viewBox="0 0 16 16" fill="none" stroke="#5f6368" strokeWidth="1.8"><path d="M15 8H2M8 1.500 1.500 8 8 14.500" /></svg></NavButton>
      <NavButton aria-label="Dalej"><svg width="16" height="16" viewBox="0 0 16 16" fill="none" stroke="#babcbe" strokeWidth="1.8"><path d="M1 8h13M8 1.500 14.500 8 8 14.500" /></svg></NavButton>
      <NavButton aria-label="Odśwież"><svg width="16" height="16" viewBox="0 0 16 16"><path d="M13.200 4.500A6.200 6.200 0 1 0 14.200 9" fill="none" stroke="#5f6368" strokeWidth="1.9" /><path d="M15 1v6H9z" fill="#5f6368" /></svg></NavButton>
      <Omnibox>
        <svg width="12" height="14" viewBox="0 0 12 14"><path d="M3.200 6V4a2.800 2.800 0 0 1 5.600 0v2" fill="none" stroke="#5f6368" strokeWidth="1.5" /><rect x="1.5" y="5" width="9" height="8" rx="1" fill="#5f6368" /></svg>
        <UrlInput aria-label="Adres" readOnly value="uonetplus-dziennik.vulcan.net.pl/gminarytro/013910/#_ribbon-dzi-tab/rbbnDziennikPozalekcyjnyBtn" />
        <svg width="16" height="16" viewBox="0 0 16 16"><path d="m8 1.800 1.900 4.300 4.600.4-3.500 3.100 1.100 4.600L8 11.800l-4.100 2.400L5 9.600 1.500 6.500l4.600-.4z" fill="none" stroke="#5f6368" strokeWidth="1.4" /></svg>
      </Omnibox>
      <Avatar aria-label="Profil">M</Avatar>
      <NavButton aria-label="Menu"><svg width="4" height="14" viewBox="0 0 4 14" fill="#5f6368"><circle cx="2" cy="2" r="1.6" /><circle cx="2" cy="7" r="1.6" /><circle cx="2" cy="12" r="1.6" /></svg></NavButton>
    </AddressRow>
    <Bookmarks>
      {bookmarks.map(([icon, text]) => <Bookmark href="#" key={text}>{icon}{text}</Bookmark>)}
      <Bookmark href="#" $push><ReadListIcon />Do przeczytania</Bookmark>
    </Bookmarks>
  </>
);

const AppHeader = () => (
  <>
    <TabBar>
      {ribbonTabs.map(([t, w], i) => <RibbonTab key={t} $w={w} $active={i === 1}>{t}</RibbonTab>)}
      <User><ChatIcon /><span>Dudka Marian [MD]</span></User>
    </TabBar>
    <Ribbon>
      <RibbonButton $active><BookShapes />{"Dziennik\nzajęć"}</RibbonButton>
      <RibbonButton><BookPerson />{"Dziennik\nspecjalisty"}</RibbonButton>
      <RibbonButton><BookClock />{"Dziennik\nświetlicy"}</RibbonButton>
      <RibbonButton $wide><BookBlocks />{"Dziennik zajęć\nrewalid.-wychow."}</RibbonButton>
      <RibbonButton><NotesCase />{"Rejestr\ngodzin"}</RibbonButton>
      <QuickMenu>
        <li><QuickLink href="#"><LockIcon />Wyloguj</QuickLink></li>
        <li><QuickLink href="#"><BuoyIcon />Pomoc</QuickLink></li>
        <li><QuickLink href="#"><HomeIcon />Przejdź do<svg width="5" height="3" viewBox="0 0 5 3"><path d="M0 0h5L2.500 3z" /></svg></QuickLink></li>
      </QuickMenu>
    </Ribbon>
  </>
);

export default function App() {
  return (
    <Page>
      <Global />
      <Browser />
      <AppHeader />
      <Work>
        <Side>
          <YearBox>
            <YearSelect aria-label="Rok szkolny" defaultValue="2021/2022"><option>2021/2022</option></YearSelect>
            <YearArrow><svg width="9" height="6" viewBox="0 0 9 6"><path d="M0 0h3l1.500 1.500L6 0h3v1.500L4.500 5.500 0 1.500z" fill="#29468a" /></svg></YearArrow>
          </YearBox>
          <TreePanel>
            <Tree>
              {tree.map((n) => (
                <TreeRow key={n.text} $selected={n.kind === "open"} $child={n.child}>
                  <Branch $child={n.child}>{n.kind !== "leaf" && <ToggleIcon open={n.kind === "open"} />}</Branch>
                  <TreeLink href="#">
                    {n.kind === "leaf" ? <LeafIcon /> : n.kind === "open" ? <FolderOpenIcon /> : <FolderIcon />}
                    {n.text}
                  </TreeLink>
                </TreeRow>
              ))}
            </Tree>
            <ScrollTrack>
              <ScrollArrow aria-label="W lewo"><svg width="4" height="8" viewBox="0 0 4 8"><path d="M4 0v8L0 4z" fill="#a3a3a3" /></svg></ScrollArrow>
              <ScrollRoom><ScrollThumb /></ScrollRoom>
              <ScrollArrow aria-label="W prawo"><svg width="4" height="8" viewBox="0 0 4 8"><path d="M0 0v8l4-4z" fill="#444" /></svg></ScrollArrow>
            </ScrollTrack>
          </TreePanel>
        </Side>
        <Splitter>
          <SplitGrip aria-label="Zwiń panel"><svg width="4" height="6" viewBox="0 0 4 6"><path d="M4 0v6L0 3z" fill="#333" /></svg></SplitGrip>
        </Splitter>
        <Menu>
          <MenuTitle><InfoBook />Dane dziennika</MenuTitle>
          <ul>
            {menu.map((m) => <li key={m}><MenuLink href="#" $active={m === "Tematy"}><Chevrons />{m}</MenuLink></li>)}
          </ul>
        </Menu>
        <Content>
          <Toolbar>
            <AddButton><PlusIcon />Dodaj</AddButton>
            <RadioLabel><Radio type="radio" name="range" defaultChecked />Pokaż ostatnie 10 tematów</RadioLabel>
            <RadioLabel><Radio type="radio" name="range" />Pokaż wszystkie tematy</RadioLabel>
          </Toolbar>
          <Table>
            <colgroup>
              <Col $w={202} /><Col $w={32} /><Col /><Col $w={37} /><Col $w={38} /><Col $w={82} /><Col $w={127} /><Col $w={225} />
            </colgroup>
            <thead>
              <tr>
                <Th>Data</Th><Th /><Th>Temat</Th>
                <Th $start><Upright>Obec.</Upright></Th><Th $start><Upright>Nieob.</Upright></Th>
                <Th>Liczba godzin</Th><Th>Domyślna forma płatności</Th><Th>Nauczyciel</Th>
              </tr>
            </thead>
            <tbody>
              {topics.map(([date, ...rest]) => (
                <Tr key={date}>
                  <Td $strong>{date}</Td>
                  <Td><EditButton aria-label="Edytuj"><PencilIcon /></EditButton></Td>
                  {rest.map((c, i) => <Td key={i}>{c}</Td>)}
                </Tr>
              ))}
            </tbody>
          </Table>
        </Content>
        <FilesBar>
          <Expand aria-label="Rozwiń"><svg width="8" height="7" viewBox="0 0 8 7" fill="none" stroke="#2c66a8" strokeWidth="1.3"><path d="M3.700.5.8 3.500l2.900 3M7.500.5l-2.900 3 2.900 3" /></svg></Expand>
          <FilesTitle>Pobieranie przygotowanych plików</FilesTitle>
        </FilesBar>
      </Work>
      <Footer>
        <a href="#">VULCAN sp. z o. o., Uonet+, wersja 21.10.0002.46375</a>
        <a href="#">Polityka prywatności i cookies</a>
      </Footer>
      <Taskbar>
        <StartButton aria-label="Start"><StartIcon /></StartButton>
        <SearchBox>
          <svg width="17" height="17" viewBox="0 0 17 17" fill="none" stroke="#222" strokeWidth="1.4"><circle cx="10.5" cy="6.5" r="5.5" /><path d="M6.500 10.500.7 16.300" /></svg>
          <SearchInput aria-label="Wyszukaj" placeholder="Wpisz tu wyszukiwane słowa" />
        </SearchBox>
        <TaskButton aria-label="Widok zadań"><TaskViewIcon /></TaskButton>
        <TaskButton aria-label="Eksplorator"><ExplorerIcon /></TaskButton>
        <TaskButton aria-label="Edge"><EdgeIcon /></TaskButton>
        <TaskButton aria-label="Firefox"><FirefoxIcon /></TaskButton>
        <TaskButton aria-label="Chrome" $active><ChromeIcon /></TaskButton>
        <Tray>
          <svg width="16" height="10" viewBox="0 0 12 8" fill="none" stroke="#fff"><path d="m1 6.500 5-5 5 5" /></svg>
          <svg width="16" height="12" viewBox="0 0 16 12" fill="none" stroke="#fff"><path d="M5.500 3.500h9v7h-9V7M1 3h4M1.500 3v2q0 1.500 1.500 1.500T4.500 5V3M2 .5V3M4 .5V3M3 6.500v4h3M15.500 5.500v3" /><path d="M7 5h6v4H7z" fill="#fff" /></svg>
          <CloudIcon back="#0f6cbd" front="#2ba0e8" />
          <CloudIcon back="#a9adb5" front="#f5f5f5" />
          <CloudIcon back="#0f6cbd" front="#2ba0e8" />
          <svg width="16" height="14" viewBox="0 0 16 14" fill="none" stroke="#fff"><path d="M.5 5h2.500l3-3v10L3 9H.5zM8 5q1.500 2 0 4M10 3.500q3 3.500 0 7" /><path d="M12.500 2q4 5 0 10" opacity=".6" /></svg>
          <Lang>POL</Lang>
          <Clock>{"16:50\n09.09.2021"}</Clock>
          <Notify aria-label="Powiadomienia"><svg width="17" height="16" viewBox="0 0 17 16" fill="none" stroke="#fff"><path d="M.5.5h16v12h-5l-2.500 3-2.500-3h-6z" /></svg></Notify>
          <ShowDesktop aria-label="Pokaż pulpit" />
        </Tray>
      </Taskbar>
    </Page>
  );
}
